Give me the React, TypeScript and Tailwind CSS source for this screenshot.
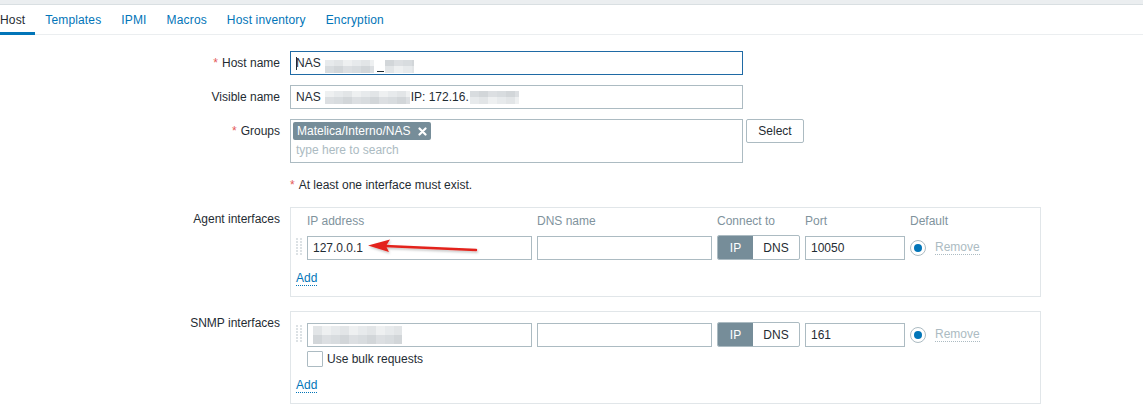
import React from "react";

const tabs = ["Host", "Templates", "IPMI", "Macros", "Host inventory", "Encryption"];

const shades = [
  "bg-[#dcdfe2]",
  "bg-[#e7eaec]",
  "bg-[#d2d6d9]",
  "bg-[#eef0f1]",
  "bg-[#d8dcdf]",
  "bg-[#e2e5e7]",
];

function Mosaic({ width, seed = 0, height = 13 }: { width: number; seed?: number; height?: number }) {
  const count = Math.ceil(width / 9);
  const rowH = Math.round(height / 2);
  return (
    <span className="inline-flex flex-col overflow-hidden blur-[0.4px]" style={{ width, height }}>
      {[0, 1].map((r) => (
        <span key={r} className="flex" style={{ height: rowH }}>
          {Array.from({ length: count }).map((_, i) => (
            <span key={i} className={`h-full w-[9px] shrink-0 ${shades[(i * 4 + r * 3 + seed) % shades.length]}`} />
          ))}
        </span>
      ))}
    </span>
  );
}

function Field({ children, className = "" }: { children?: React.ReactNode; className?: string }) {
  return (
    <div className={`flex h-[24px] items-center border border-[#acbbc2] bg-white px-[5px] ${className}`}>{children}</div>
  );
}

function Label({ children, required }: { children: React.ReactNode; required?: boolean }) {
  return (
    <div className="w-[280px] shrink-0 text-right leading-[24px]">
      {required && <span className="mr-[4px] text-[#e45959]">*</span>}
      {children}
    </div>
  );
}

function Grip() {
  return (
    <svg width="6" height="19" className="block">
      {[0, 3, 6, 9, 12, 15].map((y) =>
        [0, 4].map((x) => <rect key={`${x}-${y}`} x={x} y={y} width="2" height="2" fill="#dde2e5" />)
      )}
    </svg>
  );
}

function Radio() {
  return (
    <div className="flex h-[16px] w-[16px] items-center justify-center rounded-full border border-[#acbbc2]">
      <div className="h-[8px] w-[8px] rounded-full bg-[#0275b8]" />
    </div>
  );
}

function AddLink() {
  return (
    <span className="ml-[5px] inline-block border-b border-dotted border-[#0275b8] leading-[14px] text-[#0275b8]">Add</span>
  );
}

function InterfaceRow({ ip, port }: { ip: React.ReactNode; port: string }) {
  return (
    <div className="flex items-center">
      <div className="w-[16px] shrink-0 pl-[5px]">
        <Grip />
      </div>
      <Field className="w-[225px]">{ip}</Field>
      <Field className="ml-[5px] w-[175px]" />
      <div className="ml-[5px] flex h-[25px] w-[83px] overflow-hidden rounded-[2px] border border-[#acbbc2]">
        <div className="flex w-[35px] items-center justify-center bg-[#768d99] text-white">IP</div>
        <div className="flex flex-1 items-center justify-center">DNS</div>
      </div>
      <Field className="ml-[5px] w-[100px]">{port}</Field>
      <div className="ml-[5px]">
        <Radio />
      </div>
      <span className="ml-[9px] border-b border-dotted border-[#acbbc2] leading-[14px] text-[#acbbc2]">Remove</span>
    </div>
  );
}

export default function App() {
  return (
    <div className="relative h-[416px] w-[1143px] overflow-hidden bg-white font-['Liberation_Sans',Arial,sans-serif] text-[12px] text-[#1f2c33]">
      <div className="h-[5px] border-b border-[#d9dfe2] bg-[#ebeef0]" />
      <div className="flex h-[30px] border-b border-[#ebeef0]">
        <div className="-ml-[10px] flex tracking-[0.15px]">
          {tabs.map((t, i) => (
            <div
              key={t}
              className={`relative flex h-full items-center px-[10px] ${i === 0 ? "text-[#1f2c33]" : "text-[#0275b8]"}`}
            >
              {t}
              {i === 0 && <span className="absolute bottom-[-1px] left-0 right-0 h-[3px] bg-[#0275b8]" />}
            </div>
          ))}
        </div>
      </div>

      <div className="pt-[16px]">
        <div className="flex">
          <Label required>Host name</Label>
          <div className="ml-[10px] flex h-[24px] w-[453px] items-center border border-[#1f6aa5] px-[5px]">
            <span className="mr-[-1px] h-[13px] w-px bg-[#1f2c33]" />
            <span>NAS</span>
            <span className="ml-[4px] flex items-end">
              <Mosaic width={49} seed={1} />
              <span className="ml-[3px] mb-[1px] h-px w-[7px] bg-[#1f2c33]" />
              <span className="ml-[1px]">
                <Mosaic width={29} seed={2} />
              </span>
            </span>
          </div>
        </div>

        <div className="mt-[10px] flex">
          <Label>Visible name</Label>
          <Field className="ml-[10px] w-[453px]">
            <span>NAS</span>
            <span className="ml-[4px] flex">
              <Mosaic width={85} seed={3} />
            </span>
            <span className="ml-[1px]">IP: 172.16.</span>
            <span className="ml-[1px] flex">
              <Mosaic width={49} seed={4} />
            </span>
          </Field>
        </div>

        <div className="mt-[10px] flex">
          <Label required>Groups</Label>
          <div className="ml-[10px] h-[44px] w-[453px] border border-[#acbbc2] pl-[2px] pt-[2px]">
            <div className="inline-flex h-[18px] items-center rounded-[2px] bg-[#768d99] pl-[4px] pr-[4px] text-white">
              <span>Matelica/Interno/NAS</span>
              <svg width="9" height="9" viewBox="0 0 9 9" className="ml-[8px]">
                <path d="M1.5 1.5 L7.5 7.5 M7.5 1.5 L1.5 7.5" stroke="#ffffff" strokeWidth="2.2" strokeLinecap="round" />
              </svg>
            </div>
            <div className="ml-[3px] mt-[3px] leading-[14px] text-[#acbbc2]">type here to search</div>
          </div>
          <div className="ml-[3px] flex h-[24px] w-[58px] items-center justify-center rounded-[2px] border border-[#acbbc2] bg-white">
            Select
          </div>
        </div>

        <div className="mt-[10px] flex">
          <div className="w-[280px] shrink-0" />
          <div className="ml-[10px] leading-[24px]">
            <span className="mr-[4px] text-[#e45959]">*</span>At least one interface must exist.
          </div>
        </div>

        <div className="mt-[10px] flex">
          <Label>Agent interfaces</Label>
          <div className="ml-[10px] h-[90px] w-[751px] border border-[#e1e6e9]">
            <div className="flex h-[25px] items-center text-[#7f939d]">
              <div className="w-[16px] shrink-0" />
              <div className="w-[225px]">IP address</div>
              <div className="ml-[5px] w-[175px]">DNS name</div>
              <div className="ml-[5px] w-[83px]">Connect to</div>
              <div className="ml-[5px] w-[100px]">Port</div>
              <div className="ml-[5px]">Default</div>
            </div>
            <div className="mt-[2px]">
              <InterfaceRow ip="127.0.0.1" port="10050" />
            </div>
            <div className="mt-[9px]">
              <AddLink />
            </div>
          </div>
        </div>

        <div className="mt-[14px] flex">
          <Label>SNMP interfaces</Label>
          <div className="ml-[10px] h-[93px] w-[751px] border border-[#e1e6e9] pt-[10px]">
            <InterfaceRow ip={<Mosaic width={89} seed={5} height={18} />} port="161" />
            <div className="ml-[16px] mt-[3px] flex items-center">
              <div className="h-[16px] w-[16px] rounded-[1px] border border-[#acbbc2]" />
              <span className="ml-[4px]">Use bulk requests</span>
            </div>
            <div className="mt-[8px]">
              <AddLink />
            </div>
          </div>
        </div>
      </div>

      <svg className="pointer-events-none absolute left-0 top-0" width="1143" height="416">
        <defs>
          <filter id="sh" x="-10%" y="-50%" width="120%" height="200%">
            <feDropShadow dx="1" dy="1.5" stdDeviation="1" floodColor="#000" floodOpacity="0.25" />
          </filter>
        </defs>
        <g filter="url(#sh)">
          <line x1="385" y1="246" x2="476" y2="250" stroke="#e3231b" strokeWidth="2.5" strokeLinecap="round" />
          <polygon points="368,245.5 390,239.5 386,246 389,252" fill="#e3231b" />
        </g>
      </svg>
    </div>
  );
}
